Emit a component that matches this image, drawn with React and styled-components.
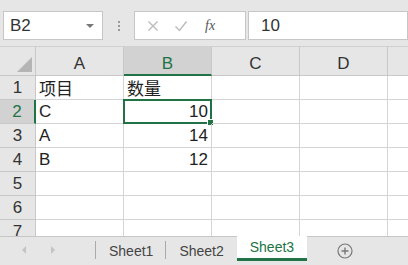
import React from 'react';
import styled, { createGlobalStyle } from 'styled-components';

const Global = createGlobalStyle`
  body {
    margin: 0;
    background: #e6e6e6;
    font-family: "Liberation Sans", "Noto Sans CJK SC", sans-serif;
  }
`;

const Page = styled.div`
  width: 408px;
  height: 265px;
  overflow: hidden;
  display: flex;
  flex-direction: column;
  background: #e6e6e6;
`;

const Toolbar = styled.div`
  height: 46px;
  display: flex;
  align-items: flex-start;
  padding: 11px 0 0 3px;
  box-sizing: border-box;
  flex-shrink: 0;
`;

const NameBox = styled.div`
  width: 100px;
  height: 29px;
  box-sizing: border-box;
  background: #fff;
  border: 1px solid #c6c6c6;
  display: flex;
  align-items: center;
  justify-content: space-between;
  padding: 0 8px 0 6px;
  font-size: 17px;
  color: #333;
`;

const Caret = styled.span`
  width: 0;
  height: 0;
  border-left: 4px solid transparent;
  border-right: 4px solid transparent;
  border-top: 4px solid #777;
`;

const Dots = styled.div`
  width: 31px;
  height: 29px;
  display: flex;
  flex-direction: column;
  align-items: center;
  justify-content: center;
  gap: 2px;
  span {
    width: 2px;
    height: 2px;
    background: #999;
  }
`;

const FxBox = styled.div`
  width: 112px;
  height: 29px;
  box-sizing: border-box;
  background: #fff;
  border: 1px solid #c6c6c6;
  display: flex;
  align-items: center;
  padding-left: 12px;
  gap: 15px;
`;

const Fx = styled.span`
  font-family: "Liberation Serif", serif;
  font-style: italic;
  font-size: 14px;
  color: #555;
  margin-left: 2px;
`;

const FormulaInput = styled.div`
  flex: 1;
  height: 29px;
  box-sizing: border-box;
  background: #fff;
  border: 1px solid #c6c6c6;
  margin-left: 2px;
  display: flex;
  align-items: center;
  padding-left: 12px;
  font-size: 17px;
  color: #333;
`;

const Grid = styled.div`
  flex: 1;
  display: grid;
  grid-template-columns: 36px 88px 88px 88px 88px 88px;
  grid-template-rows: 29px repeat(7, 24px);
  background: #fff;
  overflow: hidden;
  border-top: 1px solid #d0d0d0;
`;

const Corner = styled.div`
  background: #e6e6e6;
  border-right: 1px solid #c8c8c8;
  border-bottom: 1px solid #c8c8c8;
  position: relative;
  &::after {
    content: '';
    position: absolute;
    right: 3px;
    bottom: 3px;
    border-left: 15px solid transparent;
    border-bottom: 15px solid #b5b5b5;
  }
`;

const ColHead = styled.div`
  background: ${p => (p.$active ? '#d2d2d2' : '#e6e6e6')};
  color: ${p => (p.$active ? '#217346' : '#333')};
  border-right: 1px solid #c8c8c8;
  border-bottom: ${p => (p.$active ? '2px solid #217346' : '1px solid #c8c8c8')};
  display: flex;
  align-items: center;
  justify-content: center;
  font-size: 17px;
  padding-top: 6px;
  box-sizing: border-box;
`;

const RowHead = styled.div`
  background: ${p => (p.$active ? '#d2d2d2' : '#e6e6e6')};
  color: ${p => (p.$active ? '#217346' : '#333')};
  border-right: ${p => (p.$active ? '2px solid #217346' : '1px solid #c8c8c8')};
  border-bottom: 1px solid #c8c8c8;
  display: flex;
  align-items: center;
  justify-content: center;
  font-size: 17px;
  box-sizing: border-box;
`;

const Cell = styled.div`
  border-right: 1px solid #d4d4d4;
  border-bottom: 1px solid #d4d4d4;
  display: flex;
  align-items: center;
  justify-content: ${p => (p.$num ? 'flex-end' : 'flex-start')};
  padding: 0 3px;
  font-size: 17px;
  color: #222;
  box-sizing: border-box;
  position: relative;
  white-space: nowrap;
`;

const Selection = styled.div`
  position: absolute;
  left: -1px;
  top: -1px;
  right: -1px;
  bottom: -1px;
  border: 2px solid #217346;
  pointer-events: none;
  &::after {
    content: '';
    position: absolute;
    right: -4px;
    bottom: -4px;
    width: 5px;
    height: 5px;
    background: #217346;
    border: 1px solid #fff;
  }
`;

const TabBar = styled.div`
  height: 29px;
  flex-shrink: 0;
  background: #e6e6e6;
  border-top: 1px solid #c6c6c6;
  display: flex;
  align-items: stretch;
  box-sizing: border-box;
`;

const Arrows = styled.div`
  width: 96px;
  display: flex;
  align-items: center;
  padding-left: 22px;
  gap: 25px;
  box-sizing: border-box;
  border-right: 1px solid #aaa;
  margin: 4px 0 6px;
`;

const Arrow = styled.span`
  width: 0;
  height: 0;
  border-top: 4px solid transparent;
  border-bottom: 4px solid transparent;
  ${p => (p.$left ? 'border-right: 4px solid #c4c4c4;' : 'border-left: 4px solid #c4c4c4;')}
`;

const Tab = styled.div`
  padding: 0 13px;
  display: flex;
  align-items: center;
  font-size: 14px;
  color: ${p => (p.$active ? '#217346' : '#444')};
  background: ${p => (p.$active ? '#fff' : 'transparent')};
  border-bottom: ${p => (p.$active ? '3px solid #217346' : 'none')};
  margin-top: ${p => (p.$active ? '-1px' : '0')};
  margin-bottom: ${p => (p.$active ? '4px' : '0')};
  box-sizing: border-box;
  position: relative;
  &::after {
    content: '';
    display: ${p => (p.$sep ? 'block' : 'none')};
    position: absolute;
    right: 0;
    top: 4px;
    bottom: 6px;
    border-right: 1px solid #aaa;
  }
`;

const AddTab = styled.div`
  display: flex;
  align-items: center;
  margin-left: 30px;
  padding-bottom: 1px;
`;

const cols = ['A', 'B', 'C', 'D', ''];
const data = [
  ['项目', '数量'],
  ['C', 10],
  ['A', 14],
  ['B', 12],
  [],
  [],
  [],
];

export default function App() {
  return (
    <Page>
      <Global />
      <Toolbar>
        <NameBox>
          B2
          <Caret />
        </NameBox>
        <Dots>
          <span />
          <span />
          <span />
        </Dots>
        <FxBox>
          <svg width="12" height="12" viewBox="0 0 12 12">
            <path d="M1.5 1.5l9 9M10.5 1.5l-9 9" stroke="#bbb" strokeWidth="1.4" />
          </svg>
          <svg width="14" height="12" viewBox="0 0 14 12">
            <path d="M1.5 6.5l4 4L12.5 1.5" stroke="#bbb" strokeWidth="1.4" fill="none" />
          </svg>
          <Fx>fx</Fx>
        </FxBox>
        <FormulaInput>10</FormulaInput>
      </Toolbar>
      <Grid>
        <Corner />
        {cols.map((c, i) => (
          <ColHead key={i} $active={c === 'B'}>
            {c}
          </ColHead>
        ))}
        {data.map((row, r) => (
          <React.Fragment key={r}>
            <RowHead $active={r === 1}>{r + 1}</RowHead>
            {cols.map((c, ci) => {
              const v = row[ci];
              return (
                <Cell key={ci} $num={typeof v === 'number'}>
                  {v}
                  {r === 1 && ci === 1 && <Selection />}
                </Cell>
              );
            })}
          </React.Fragment>
        ))}
      </Grid>
      <TabBar>
        <Arrows>
          <Arrow $left />
          <Arrow />
        </Arrows>
        <Tab $sep>Sheet1</Tab>
        <Tab>Sheet2</Tab>
        <Tab $active>Sheet3</Tab>
        <AddTab>
          <svg width="16" height="16" viewBox="0 0 16 16">
            <circle cx="8" cy="8" r="7" stroke="#777" strokeWidth="1.2" fill="none" />
            <path d="M8 4.5v7M4.5 8h7" stroke="#777" strokeWidth="1.4" />
          </svg>
        </AddTab>
      </TabBar>
    </Page>
  );
}
